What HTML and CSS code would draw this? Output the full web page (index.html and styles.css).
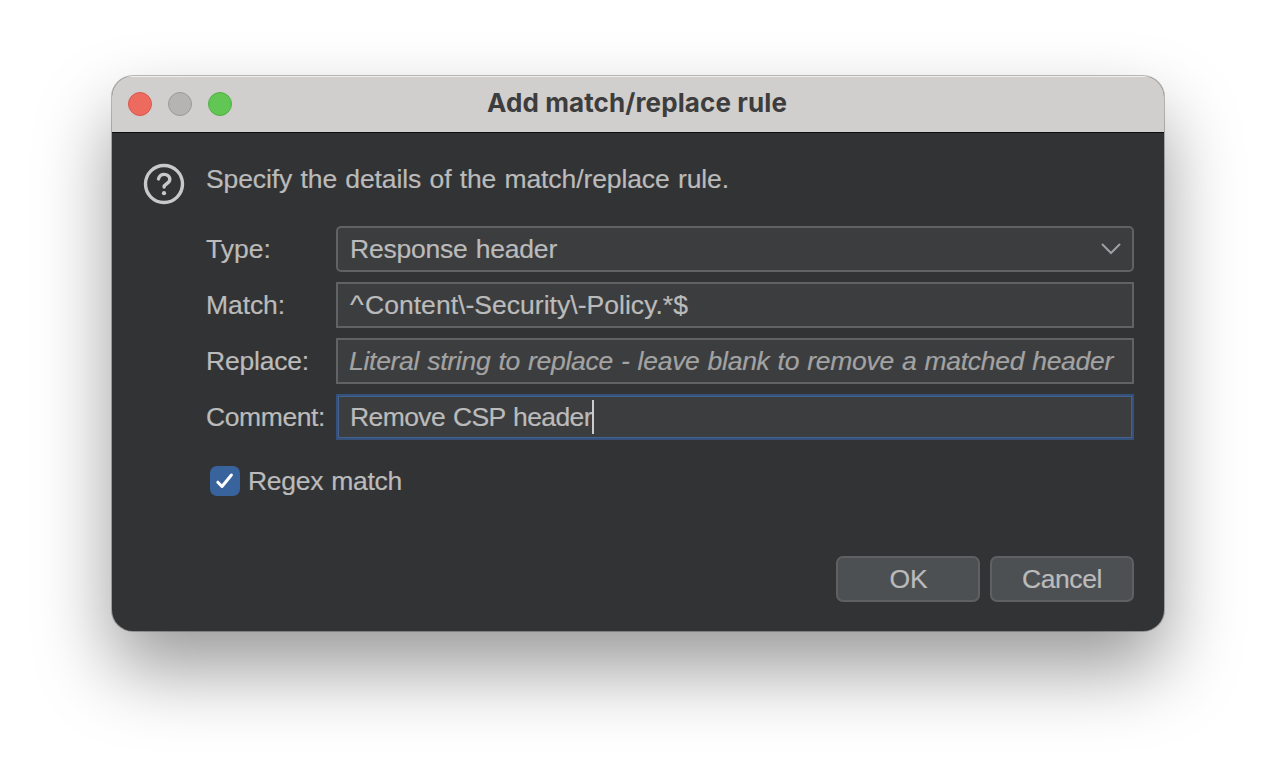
FILE: index.html
```html
<!DOCTYPE html>
<html lang="en">
<head>
<meta charset="utf-8">
<title>Add match/replace rule</title>
<link rel="stylesheet" href="styles.css">
</head>
<body>
<main class="dialog">
  <header class="titlebar">
    <div class="lights"><span class="light close"></span><span class="light minimize"></span><span class="light expand"></span></div>
    <h1 class="title"><span class="fit" data-w="300">Add match/replace rule</span></h1>
  </header>
  <section class="content">
    <svg class="question" viewBox="0 0 42 42" aria-hidden="true">
      <circle cx="21" cy="21" r="18.500"/>
      <path d="M15.500 15.900c.8-2.900 2.900-4.500 5.600-4.500 3.200 0 5.700 2.200 5.700 5.200 0 4.300-5.700 4-5.700 7.500"/>
      <circle class="dot" cx="21" cy="30.200" r="2.100"/>
    </svg>
    <div class="main">
      <p class="intro"><span class="fit" data-w="523">Specify the details of the match/replace rule.</span></p>
      <div class="form">
        <span class="label"><span class="fit" data-w="65">Type:</span></span>
        <div class="field select"><span class="fit" data-w="207">Response header</span><svg class="chevron" viewBox="0 0 20 12" aria-hidden="true"><path d="M1.500 1.500 10 10l8.500-8.500"/></svg></div>
        <span class="label"><span class="fit" data-w="79">Match:</span></span>
        <div class="field"><span class="pattern"><span class="hat">^</span><span class="fit" data-w="323">Content\-Security\-Policy.*$</span></span></div>
        <span class="label"><span class="fit" data-w="103">Replace:</span></span>
        <div class="field placeholder"><span class="fit" data-w="764">Literal string to replace - leave blank to remove a matched header</span></div>
        <span class="label"><span class="fit" data-w="119">Comment:</span></span>
        <div class="field focused"><span class="fit" data-w="242">Remove CSP header</span><i class="caret"></i></div>
      </div>
      <div class="check"><span class="box"><svg viewBox="0 0 30 30" aria-hidden="true"><path d="m7.800 16.200 4.200 4.300L21.400 9"/></svg></span><span class="fit" data-w="154">Regex match</span></div>
      <div class="actions"><button class="button"><span class="fit" data-w="38">OK</span></button><button class="button"><span class="fit" data-w="80">Cancel</span></button></div>
    </div>
  </section>
</main>
<script src="fit.js"></script>
</body>
</html>
```
FILE: styles.css
```css
* { box-sizing: border-box; }
body { margin: 0; width: 1276px; height: 780px; overflow: hidden; background: #fff; padding: 76px 112px; font: 26.5px/30px "Liberation Sans", Arial, sans-serif; color: #bbb; }
.dialog { width: 1052px; height: 555px; border-radius: 21px; overflow: hidden; background: #323335; box-shadow: 0 0 0 1px rgba(0,0,0,.25), 0 38px 76px rgba(0,0,0,.4); }
.titlebar { height: 57px; display: grid; grid-template-columns: 120px 1fr 122px; align-items: center; background: #d1cfcd; border-top: 1px solid #f1f0ef; border-bottom: 1px solid #0c0e0f; }
.lights { display: flex; gap: 16px; padding: 0 0 1px 16px; }
.light { width: 24px; height: 24px; border-radius: 50%; border: 1px solid; }
.close { background: #ed6a5f; border-color: #d8584e; }
.minimize { background: #b6b4b2; border-color: #9b9997; }
.expand { background: #62c655; border-color: #52ae45; }
.title { margin: 0; padding-bottom: 3px; text-align: center; font: bold 26px/30px Inter, sans-serif; color: #3e3d3d; }
.fit { display: inline-block; white-space: pre; word-spacing: 1px; }
.title .fit { word-spacing: 0; }
.content { display: flex; padding: 30px 30px 30px 31px; -webkit-text-stroke: .2px; }
.question { width: 42px; height: 42px; flex: none; margin-right: 21px; fill: none; stroke: #c9c9c9; stroke-width: 3.4; stroke-linecap: round; }
.question .dot { fill: #c9c9c9; stroke: none; }
.main { flex: 1; }
.intro { margin: 1px 0 32px; }
.form { display: grid; grid-template-columns: 130px 798px; row-gap: 10px; }
.label { line-height: 46px; }
.field { height: 46px; display: flex; align-items: center; border: 2px solid #616263; background: #3c3d3f; padding: 0 12px; }
.select { justify-content: space-between; border-radius: 5px; padding-right: 11px; }
.chevron { width: 20px; height: 12px; fill: none; stroke: #9da0a3; stroke-width: 2; stroke-linecap: round; }
.pattern { display: inline-flex; }
.hat { width: 15px; transform: scaleX(1.1); transform-origin: left; }
.placeholder { font-style: italic; color: #a3a3a3; padding-left: 11px; }
.focused { border-color: #35507a; box-shadow: inset 0 0 0 1px #43638d; }
.caret { width: 2px; height: 34px; background: #ccc; }
.check { display: flex; gap: 8px; align-items: center; margin: 26px 0 0 4px; height: 30px; }
.box { width: 30px; height: 30px; border-radius: 7px; background: #38639c; }
.box svg { display: block; fill: none; stroke: #fff; stroke-width: 3; stroke-linecap: round; stroke-linejoin: round; }
.actions { display: flex; justify-content: flex-end; gap: 10px; margin-top: 60px; }
.button { width: 144px; height: 46px; border: 2px solid #5f6061; border-radius: 7px; background: #4c5052; color: #bbb; font: inherit; padding: 0 0 0 1px; }
.button + .button { padding: 0; }
```
FILE: fit.js
```js
// Adjust tracking so each label keeps its intended line width.
document.querySelectorAll('.fit').forEach(el => {
  const gap = (Number(el.dataset.w) - el.getBoundingClientRect().width) / el.textContent.length;
  el.style.letterSpacing = gap + 'px';
});
```
